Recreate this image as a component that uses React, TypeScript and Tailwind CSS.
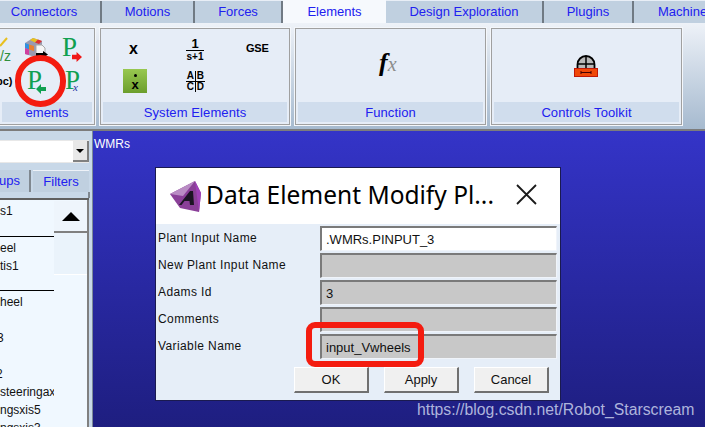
const font = { fontFamily: '"Liberation Sans", Arial, sans-serif' };

function Tab({ label, w, active, className }: { label: string; w: string; active?: boolean; className?: string }) {
  return (
    <div className={`${w} shrink-0 flex items-center justify-center text-[13px] text-[#2020f0] ${active ? "bg-[#f6f9fd] h-[23px]" : "bg-[#c0d0e0] h-[22px] mt-px border-r-2 border-[#707a84]"} ${className ?? ""}`}>
      {label}
    </div>
  );
}

function Panel({ w, caption, className, children }: { w: string; caption: string; className?: string; children?: React.ReactNode }) {
  return (
    <div className={`${w} shrink-0 h-[97px] bg-[#e6edf7] border border-[#a0a0a0] shadow-[0_0_0_1px_#f4f7fb] flex flex-col ${className ?? ""}`}>
      <div className="flex-1 relative">{children}</div>
      <div className="h-[20px] mx-[2px] mb-[2px] pt-px bg-[#d0dded] flex items-center justify-center text-[13px] tracking-[0.1px] text-[#2020f0] whitespace-nowrap">{caption}</div>
    </div>
  );
}

function PIcon({ color, children }: { color: string; children?: React.ReactNode }) {
  return (
    <span className="relative block text-[27px] leading-none" style={{ color, fontFamily: '"Liberation Serif", serif' }}>
      P{children}
    </span>
  );
}

function Field({ value, editable }: { value?: string; editable?: boolean }) {
  return (
    <div className={`w-[237px] h-[25px] border-t-2 border-l-2 border-[#7a7a7a] border-r border-b border-r-[#f0f4fa] border-b-[#f0f4fa] flex items-center pl-[4px] pt-px text-[13px] text-[#111] ${editable ? "bg-white" : "bg-[#c8c8c8]"}`}>
      {value}
    </div>
  );
}

function DialogButton({ label }: { label: string }) {
  return (
    <div className="w-[75px] h-[26px] bg-[#f0f0f0] border border-white border-r-2 border-b-2 border-r-[#707070] border-b-[#707070] flex items-center justify-center text-[13px] text-[#111]">
      {label}
    </div>
  );
}

function ListRow({ text, className }: { text?: string; className?: string }) {
  return <div className={`h-[18px] leading-[18px] whitespace-nowrap ${className ?? ""}`}>{text}</div>;
}

export default function App() {
  const rows: [string, string | undefined, boolean][] = [
    ["Plant Input Name", ".WMRs.PINPUT_3", true],
    ["New Plant Input Name", undefined, false],
    ["Adams Id", "3", false],
    ["Comments", undefined, false],
    ["Variable Name", "input_Vwheels", false],
  ];
  return (
    <div className="relative w-[705px] h-[427px] overflow-hidden flex flex-col bg-[#c8d8e8]" style={font}>
      {/* tabs */}
      <div className="h-[23px] flex gap-0 bg-[#e8eef6] shrink-0 overflow-hidden">
        <Tab label="Connectors" w="w-[102px]" className="pr-[12px]" />
        <Tab label="Motions" w="w-[93px]" />
        <Tab label="Forces" w="w-[88px]" />
        <Tab label="Elements" w="w-[103px]" active />
        <Tab label="Design Exploration" w="w-[158px]" />
        <Tab label="Plugins" w="w-[90px]" />
        <div className="w-[71px] shrink-0 h-[22px] mt-px bg-[#c0d0e0] text-[13px] text-[#2020f0] flex items-center pl-[24px] whitespace-nowrap overflow-hidden">Machine</div>
      </div>
      {/* ribbon */}
      <div className="h-[108px] shrink-0 flex gap-[5px] pt-[5px] bg-gradient-to-b from-[#eef2f8] to-[#a6bacf] border-b-2 border-[#7c7c7c]">
        <Panel w="w-[96px]" caption="ements" className="-ml-px">
          <svg className="absolute left-0 top-[8px]" width="8" height="10" viewBox="0 0 8 10">
            <path d="M0 9 7 1" stroke="#e8c020" strokeWidth="2" />
          </svg>
          <span className="absolute left-0 top-[20px] text-[14px] leading-none text-[#2f8f3c]">/z</span>
          <svg className="absolute left-[24px] top-[8px]" width="25" height="22" viewBox="0 0 25 22">
            <path d="M1 6 9 1l9 3v9l-7 7-10-3z" fill="#9a9ab0" />
            <path d="M6 3 9 1l5 1.500-3 3z" fill="#e8c020" />
            <path d="M11 5.500 14 2.500l4 1.500-3 3z" fill="#e03030" />
            <path d="M1 6l4 1.500v5L1 11z" fill="#3090e0" />
            <path d="M1 11l4 1.500V18l-4-1z" fill="#d040a0" />
            <path d="M5 7.500l5 1.500v5l-5-1.500z" fill="#e88030" />
            <path d="M12 8h6l3 3v7h-9z" fill="#f6f6f6" stroke="#a8a8a8" />
            <path d="M12 16h7v-2l5 3.500-5 3.500v-2h-7z" fill="#000" />
          </svg>
          <div className="absolute left-[62px] top-[5px]">
            <PIcon color="#10a050">
              <svg className="absolute left-[10px] top-[18px]" width="10" height="10" viewBox="0 0 11 11">
                <path d="M0 3h5V0l6 5.500L5 11V8H0z" fill="#f01818" />
              </svg>
            </PIcon>
          </div>
          <span className="absolute -left-[4px] top-[47px] text-[11px] leading-none font-bold text-black">pc)</span>
          <div className="absolute left-[27px] top-[38px]">
            <PIcon color="#10a050">
              <svg className="absolute left-[9px] top-[17px]" width="10" height="10" viewBox="0 0 10 10">
                <path d="M10 3H5V0L0 5l5 5V7h5z" fill="#10a050" />
              </svg>
            </PIcon>
          </div>
          <div className="absolute left-[65px] top-[38px]">
            <PIcon color="#10a050">
              <span className="absolute left-[8px] top-[15px] text-[11px] leading-none italic text-[#2030a0]">x</span>
            </PIcon>
          </div>
        </Panel>
        <Panel w="w-[190px]" caption="System Elements">
          <span className="absolute left-[28px] top-[12px] text-[16px] leading-none font-bold">x</span>
          <div className="absolute left-[85px] top-[8px] w-[18px] flex flex-col items-center text-[10px] leading-[11px] font-bold">
            <span className="text-[13px] leading-[13px]">1</span>
            <span className="w-full border-t border-black text-center">s+1</span>
          </div>
          <span className="absolute left-[145px] top-[14px] text-[11px] leading-none font-bold whitespace-nowrap tracking-[-0.2px]">GSE</span>
          <div className="absolute left-[22px] top-[40px] w-[24px] h-[24px] bg-gradient-to-b from-[#98c850] to-[#6c9e2c] flex flex-col items-center justify-center text-[13px] leading-[9px] font-bold">
            <span className="w-[3px] h-[3px] mb-[3px] rounded-full bg-black" />
            <span>x</span>
          </div>
          <div className="absolute left-[85px] top-[42px] w-[19px] grid grid-cols-2 text-[10px] leading-[10px] font-bold text-center">
            <span className="border-r border-b border-black">A</span>
            <span className="border-b border-black">B</span>
            <span className="border-r border-black">C</span>
            <span>D</span>
          </div>
        </Panel>
        <Panel w="w-[191px]" caption="Function">
          <div className="absolute left-[83px] top-[21px] text-[26px] leading-none italic font-bold whitespace-nowrap" style={{ fontFamily: '"Liberation Serif", serif' }}>
            f<span className="text-[20px] text-[#8c8c8c] font-normal">x</span>
          </div>
        </Panel>
        <Panel w="w-[191px]" caption="Controls Toolkit">
          <svg className="absolute left-[82px] top-[26px]" width="24" height="22" viewBox="0 0 24 22">
            <path d="M3.500 13V9.500a8.500 8.500 0 0 1 17 0V13" fill="#b8b8b8" stroke="#000" strokeWidth="1.800" />
            <path d="M3.500 9h17M12 1v12" stroke="#000" strokeWidth="1.500" />
            <rect x="0.500" y="13.500" width="23" height="8" fill="#f04808" stroke="#c01808" />
            <path d="M7 17.500h10M7 16v3M17 16v3" stroke="#400" strokeWidth="1" fill="none" />
          </svg>
        </Panel>
      </div>
      {/* body */}
      <div className="flex-1 flex min-h-0">
        <aside className="w-[93px] shrink-0 bg-[#c8d8e8] border-r border-[#7c8a98] flex flex-col">
          <div className="h-[9px] shrink-0" />
          <div className="h-[23px] mr-[3px] bg-white border-y border-[#e8e8e8] flex justify-end shrink-0">
            <div className="w-[16px] bg-[#e8e8e8] border-r-2 border-b-2 border-[#808080] flex items-center justify-center">
              <span className="w-0 h-0 border-x-[4px] border-x-transparent border-t-[4px] border-t-black" />
            </div>
          </div>
          <div className="h-[7px] shrink-0" />
          <div className="h-[22px] flex gap-[2px] mr-[3px] shrink-0 text-[13px] text-[#2020f0]">
            <div className="w-[31px] bg-[#c0d0e0] border-r-2 border-[#808890] flex items-center justify-end pr-[9px]">ups</div>
            <div className="flex-1 bg-[#c0d0e0] border-t border-[#eef2f8] flex items-center justify-center">Filters</div>
          </div>
          <div className="h-[6px] mr-[2px] shrink-0 bg-[#c8d8e8] border-r-2 border-[#808890]" />
          <div className="flex-1 min-h-0 ml-0 mr-[3px] flex bg-[#f0f8ff] border-t-2 border-[#606060] overflow-hidden">
            <div className="w-[54px] shrink-0 text-[12px] text-[#111] overflow-hidden pt-[2px]">
              <ListRow text="s1" />
              <div className="h-[16px] border-b border-black box-content" />
              <div className="h-[2px]" />
              <ListRow text="eel" />
              <ListRow text="tis1" />
              <div className="h-[15px] border-b border-black box-content" />
              <div className="h-[2px]" />
              <ListRow text="heel" />
              <ListRow />
              <ListRow text="3" className="-ml-[3px]" />
              <ListRow />
              <ListRow text="2" className="-ml-[4px]" />
              <ListRow text="steeringax" />
              <ListRow text="ngsxis5" />
              <ListRow text="ngsxis3" />
            </div>
            <div className="flex-1 flex flex-col border-r-2 border-[#808080]">
              <div className="h-[32px] mt-px bg-[#eef5fc] border-b-2 border-[#808080] flex items-center justify-center">
                <span className="w-0 h-0 border-x-[9px] border-x-transparent border-b-[9px] border-b-black" />
              </div>
              <div className="h-[41px] bg-[#eaf3fb]" />
              <div className="flex-1 bg-[#f0f8ff] border-t border-white" />
            </div>
          </div>
        </aside>
        <main className="relative flex-1 bg-gradient-to-b from-[#3434c8] to-[#1e1e80]">
          <span className="absolute left-[1px] top-[4px] text-[12px] text-white">WMRs</span>
          {/* dialog window */}
          <div className="absolute left-[62px] top-[36px] w-[406px] h-[234px] border border-[#1a1a50] bg-[#e6eef8] flex flex-col">
            <div className="h-[56px] bg-white shrink-0 flex items-center pl-[13px] relative">
              <svg width="33" height="33" viewBox="0 0 33 33" className="shrink-0">
                <path d="M1 14 26 1l6 12-2 19-19-4z" fill="#8a3f98" />
                <path d="M1 14 26 1 14 16z" fill="#b98cc4" />
                <path d="M26 1l6 12-2 19z" fill="#a040b8" />
                <path d="M10 25 21 11h3l1 14h-4l-.5-4h-5l-3 4z" fill="#1c1424" />
              </svg>
              <span className="ml-[4px] text-[24.500px] leading-none -mt-px text-black whitespace-nowrap" style={{ fontFamily: '"Noto Sans", sans-serif' }}>
                Data Element Modify Pl...
              </span>
              <svg className="absolute left-[360px] top-[16px]" width="21" height="21" viewBox="0 0 21 21">
                <path d="M1 1l19 19M20 1 1 20" stroke="#1a1a1a" strokeWidth="1.800" />
              </svg>
            </div>
            <div className="flex-1 flex flex-col pl-[2px] pr-[3px] pt-[2px] gap-[2px] text-[12px] text-[#111] tracking-[0.4px]">
              {rows.map(([label, value, editable]) => (
                <div key={label} className="flex items-center justify-between">
                  <span className="-mt-px">{label}</span>
                  <div className="tracking-normal">
                    <Field value={value} editable={editable} />
                  </div>
                </div>
              ))}
              <div className="flex justify-end gap-[15px] pr-[8px] pt-[6px] tracking-normal">
                <DialogButton label="OK" />
                <DialogButton label="Apply" />
                <DialogButton label="Cancel" />
              </div>
            </div>
          </div>
        </main>
      </div>
      {/* annotations laid over the picture */}
      <div className="absolute left-[306px] top-[322px] w-[118px] h-[45px] border-[6px] border-[#f41c10] rounded-[9px]" />
      <div className="absolute left-[15px] top-[55px] w-[51px] h-[52px] border-[6px] border-[#f41c10] rounded-full" />
      <span className="absolute left-[417px] top-[398px] text-[15.800px] text-[#aeb4dc] whitespace-nowrap">https://blog.csdn.net/Robot_Starscream</span>
    </div>
  );
}
